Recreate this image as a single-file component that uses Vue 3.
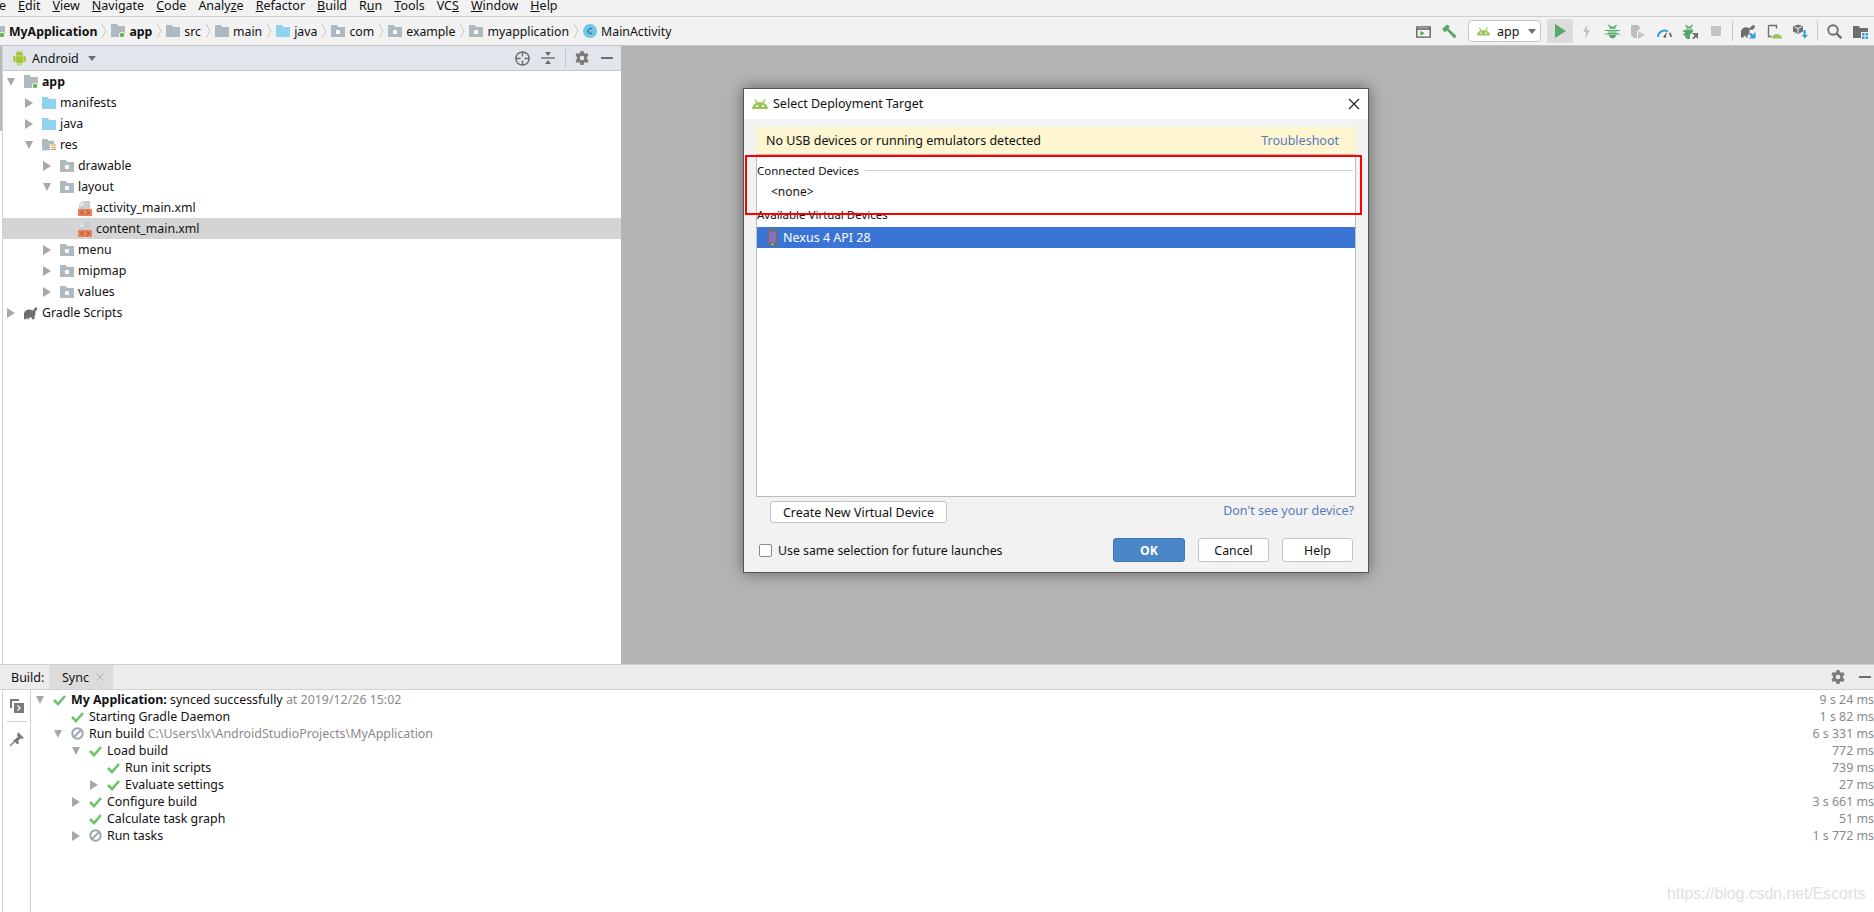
<script setup>
const menus = [['F','ile'],['E','dit'],['V','iew'],['N','avigate'],['C','ode'],['','Analy','z','e'],['R','efactor'],['B','uild'],['','R','u','n'],['T','ools'],['','VC','S',''],['W','indow'],['H','elp']]
const crumbs = [
  { icon:'mod', t:'MyApplication', b:true },
  { icon:'mod', t:'app', b:true },
  { icon:'fg', t:'src' },
  { icon:'fg', t:'main' },
  { icon:'fb', t:'java' },
  { icon:'fr', t:'com' },
  { icon:'fr', t:'example' },
  { icon:'fr', t:'myapplication' },
  { icon:'cls', t:'MainActivity', last:true },
]
const tree = [
  { l:0, a:'d', i:'mod', t:'app', b:true },
  { l:1, a:'r', i:'fb', t:'manifests' },
  { l:1, a:'r', i:'fb', t:'java' },
  { l:1, a:'d', i:'fres', t:'res' },
  { l:2, a:'r', i:'fr', t:'drawable' },
  { l:2, a:'d', i:'fr', t:'layout' },
  { l:3, i:'xml', t:'activity_main.xml' },
  { l:3, i:'xml', t:'content_main.xml', sel:true },
  { l:2, a:'r', i:'fr', t:'menu' },
  { l:2, a:'r', i:'fr', t:'mipmap' },
  { l:2, a:'r', i:'fr', t:'values' },
  { l:0, a:'r', i:'gradle', t:'Gradle Scripts' },
]
const build = [
  { l:0, a:'d', i:'chk', b:'My Application:', t:' synced successfully', g:' at 2019/12/26 15:02', d:'9 s 24 ms' },
  { l:1, i:'chk', t:'Starting Gradle Daemon', d:'1 s 82 ms' },
  { l:1, a:'d', i:'no', t:'Run build', g:' C:\\Users\\lx\\AndroidStudioProjects\\MyApplication', d:'6 s 331 ms' },
  { l:2, a:'d', i:'chk', t:'Load build', d:'772 ms' },
  { l:3, i:'chk', t:'Run init scripts', d:'739 ms' },
  { l:3, a:'r', i:'chk', t:'Evaluate settings', d:'27 ms' },
  { l:2, a:'r', i:'chk', t:'Configure build', d:'3 s 661 ms' },
  { l:2, i:'chk', t:'Calculate task graph', d:'51 ms' },
  { l:2, a:'r', i:'no', t:'Run tasks', d:'1 s 772 ms' },
]
</script>

<template>
  <div class="ide">
    <svg class="sprite" aria-hidden="true">
      <symbol id="fg" viewBox="0 0 14 14"><path d="M0 1h6l1 2h7v10H0z" fill="#AEB9C0"/></symbol>
      <symbol id="fb" viewBox="0 0 14 14"><path d="M0 1h6l1 2h7v10H0z" fill="#8FD3EE"/></symbol>
      <symbol id="fr" viewBox="0 0 14 14"><path d="M0 1h6l1 2h7v10H0z" fill="#AEB9C0"/><rect x="5" y="6" width="4" height="4" rx="1" fill="#fff"/></symbol>
      <symbol id="fres" viewBox="0 0 16 14"><path d="M0 0h6l1 2h7v11H0z" fill="#AEB9C0"/><path d="M9 6h7v9H9z" fill="#fff"/><path d="M10 7h6M10 9.500h6M10 12h6" stroke="#D19A4B" stroke-width="1.200"/></symbol>
      <symbol id="mod" viewBox="0 0 14 14"><path d="M0 0h6l1 2h7v11H0z" fill="#AEB9C0"/><circle cx="11" cy="11" r="3" fill="#fff"/><circle cx="11" cy="11" r="2.200" fill="#62B543"/></symbol>
      <symbol id="cls" viewBox="0 0 14 14"><circle cx="7" cy="7" r="7" fill="#6FC5E8"/><path d="M9 5a2.500 2.500 0 1 0 0 4" fill="none" stroke="#22566E" stroke-width="1"/></symbol>
      <symbol id="xml" viewBox="0 0 14 16"><path d="M4 1h8v8H1V5z" fill="#C9CDD1"/><path d="M5 2v3H2" fill="none" stroke="#fff"/><rect y="9" width="14" height="7" fill="#E8825A"/><path d="M5 10.500 3 12.500l2 2M9 10.500l2 2-2 2" fill="none" stroke="#8a3a1a" stroke-width="1"/></symbol>
      <symbol id="gradle" viewBox="0 0 16 14"><path d="M0 14V8C0 5 3 3 6 3c2 0 3 1 5 1 0-2 2-4 4-3 1 2-1 3-2 4v3c0 2-1 2-1 3v3H9v-2H6v2H4v-2c-1 0-1 1-1 2z" fill="#6E6E6E"/></symbol>
      <symbol id="chk" viewBox="0 0 13 12"><path d="M1 6.500 5 10.500 12 2.500" fill="none" stroke="#6CC46C" stroke-width="2.600"/></symbol>
      <symbol id="no" viewBox="0 0 13 13"><circle cx="6.500" cy="6.500" r="5.200" fill="none" stroke="#9AA7B0" stroke-width="2"/><path d="M3 10 10 3" stroke="#9AA7B0" stroke-width="2"/></symbol>
      <symbol id="robot" viewBox="0 0 14 18"><path d="M3 6a4 4 0 0 1 8 0zM3 7h8v7H9v3H8v-3H6v3H5v-3H3zM0 7h2v6H0zM12 7h2v6h-2zM4 0l1.500 3M10 0 8.500 3" fill="#A4C639" stroke="#A4C639" stroke-width=".6"/></symbol>
      <symbol id="head" viewBox="0 0 16 10"><path d="M0 10a8 7 0 0 1 16 0z" fill="#9CC45A"/><path d="M3 0l2 4M13 0l-2 4" stroke="#9CC45A" stroke-width="1.300"/><circle cx="5" cy="7" r="1" fill="#fff"/><circle cx="11" cy="7" r="1" fill="#fff"/></symbol>
      <symbol id="gear" viewBox="0 0 14 14"><path fill-rule="evenodd" d="M5.500 0h3l.4 2 1.500.8 1.900-.8L13.500 4.700 12 6v2l1.500 1.300-1.200 2.700-1.900-.8-1.500.8-.4 2h-3l-.4-2-1.500-.8-1.900.8L.5 9.300 2 8V6L.5 4.700 1.700 2l1.900.8L5.100 2zM7 4.700a2.300 2.300 0 1 0 0 4.600 2.300 2.300 0 0 0 0-4.600z" fill="#7a7a7a"/></symbol>
      <symbol id="phone" viewBox="0 0 12 20"><rect width="12" height="20" rx="2" fill="#6E6E6E"/><rect x="2" y="3" width="8" height="13" fill="#8A6FC0"/><circle cx="6" cy="18" r="1" fill="#ddd"/></symbol>
    </svg>

    <div class="menubar">
      <span v-for="(m, k) in menus" :key="k" class="menu"><template v-if="m.length === 2"><u>{{ m[0] }}</u>{{ m[1] }}</template><template v-else>{{ m[1] }}<u>{{ m[2] }}</u>{{ m[3] }}</template></span>
    </div>

    <div class="toolbar">
      <div class="crumbs">
        <template v-for="c in crumbs" :key="c.t">
          <svg class="ic14"><use :href="'#' + c.icon"/></svg>
          <span class="crumb" :class="{ bold: c.b }">{{ c.t }}</span>
          <svg v-if="!c.last" class="chev" viewBox="0 0 6 16"><path d="M1 1 5 8 1 15" fill="none" stroke="#c8c8c8"/></svg>
        </template>
      </div>
      <div class="actions">
        <svg class="tb" viewBox="0 0 15 15"><path d="M.8 2.800h13.400v10.400H.8zM.8 5h13.400" fill="none" stroke="#5c5c5c" stroke-width="1.300"/><path d="M4.500 7l4 2.300-4 2.300z" fill="#499C54"/></svg>
        <svg class="tb" viewBox="0 0 15 15"><path d="M0 5 5 .5l3 2L6.500 4.500l8 7.500-2.200 2.500L5 6.500 3 8.500z" fill="#59A869"/></svg>
        <div class="combo">
          <svg class="combo-ic"><use href="#head"/></svg>
          <span class="combo-t">app</span>
          <span class="combo-caret"></span>
        </div>
        <div class="runbtn"><svg width="11" height="14" viewBox="0 0 11 14"><path d="M0 0 11 7 0 14z" fill="#59A869"/></svg></div>
        <svg class="tb" viewBox="0 0 15 15"><path d="M8 1 4 8h3l-1 7 5-9H8z" fill="#c4c4c4"/></svg>
        <svg class="tb" viewBox="0 0 15 15"><path d="M4 .5 6 2.500h3L11 .5l1 1-2 1.800 1.200 1.400H3.800L5 3.300l-2-1.800zM3 6h9v1.500H3zM3 8.500h9V10H3zM3.500 11h8c-1 2-2.500 3.500-4 3.500s-3-1.500-4-3.500z" fill="#59A869"/><path d="M0 6h15v1H0zM0 9.500h15v1H0z" fill="#59A869"/></svg>
        <svg class="tb" viewBox="0 0 15 15"><path d="M0 1h7l2 3v1L6 7v7H3L0 11z" fill="#bdbdbd"/><path d="M7 7l7 4-7 4z" fill="#c8c8c8"/></svg>
        <svg class="tb" viewBox="0 0 15 15"><path d="M1 13a6.500 6.500 0 0 1 10-5.500" fill="none" stroke="#389FD6" stroke-width="2"/><path d="M12.500 9a6.500 6.500 0 0 1 1.500 4" fill="none" stroke="#6e6e6e" stroke-width="2"/><path d="M6 13l4-5-1.500 6z" fill="#555"/></svg>
        <svg class="tb" viewBox="0 0 15 15"><path d="M3 .5 5 2.500h2L9 .5l1 1-2 1.800L9 4.500H3l1-1.200-2-1.800zM2 5.500h8V8L7 10.500V15H5c-2 0-3-2-3.500-4H0V9.500h2V8H0V6.500h2z" fill="#59A869"/><path d="M9 9h6v6l-2-2-2.500 2.500-1.300-1.300L11.700 11.700z" fill="#6e6e6e"/></svg>
        <span class="stop"></span>
        <span class="tsep sa"></span>
        <svg class="tb" viewBox="0 0 16 15"><path d="M0 14V8c0-3 3-5 5.500-5 2 0 2.500 1 4 1 .5-2 3-4 5-3 1 2-1 3.500-2 4.500H9v4l-2 2v2.500H5v-2H3v2z" fill="#6E6E6E"/><path d="M15.500 8v7h-7l2.300-2.300L8.500 10.500l1.800-1.800 2.300 2.200z" fill="#389FD6"/></svg>
        <svg class="tb" viewBox="0 0 15 15"><path d="M1.500 1.500h8v3M1.500 1.500v11h3" fill="none" stroke="#6e6e6e" stroke-width="1.400"/><path d="M5 14.500a5 4.500 0 0 1 10 0z" fill="#9CC45A"/></svg>
        <svg class="tb" viewBox="0 0 15 15"><path d="M5 .5l5 2v5l-5 2.500L0 7.500v-5z" fill="#6e6e6e"/><path d="M1.500 3 5 4.500 8.500 3M5 4.500V9" fill="none" stroke="#fff"/><path d="M10.500 6h2.200v5H15l-3.200 3.500L8.500 11h2z" fill="#389FD6"/></svg>
        <span class="tsep sb"></span>
        <svg class="tb" viewBox="0 0 15 15"><circle cx="6" cy="6" r="4.800" fill="none" stroke="#6e6e6e" stroke-width="1.900"/><path d="M9.500 9.500l4.800 4.800" stroke="#6e6e6e" stroke-width="2.400"/></svg>
        <svg class="tb" viewBox="0 0 15 15"><path d="M0 2h6l1 2h8v4H8v6H0z" fill="#6e6e6e"/><path d="M9 9h2.500v2.500H9zM12.500 9H15v2.500h-2.500zM9 12.500h2.500V15H9zM12.500 12.500H15V15h-2.500z" fill="#389FD6"/></svg>
      </div>
    </div>

    <div class="main">
      <div class="strip"><span class="strip-mark"></span></div>
      <div class="project">
        <div class="phead">
          <svg class="robot"><use href="#robot"/></svg>
          <span class="ptitle">Android</span>
          <span class="caret"></span>
          <div class="pacts">
            <svg class="pa cross" viewBox="0 0 18 18"><circle cx="9" cy="9" r="7" fill="none" stroke="#6e6e6e" stroke-width="1.600"/><path d="M9 2v5M9 11v5M2 9h5M11 9h5" stroke="#6e6e6e" stroke-width="1.600"/></svg>
            <svg class="pa" viewBox="0 0 14 14"><path d="M0 7h14" stroke="#6e6e6e" stroke-width="1.400"/><path d="M4 1h6L7 5zM4 13h6L7 9z" fill="#6e6e6e"/></svg>
            <span class="psep"></span>
            <svg class="pa pgear"><use href="#gear"/></svg>
            <span class="pmin pm"></span>
          </div>
        </div>
        <div class="ptree">
          <div v-for="r in tree" :key="r.t" class="prow" :class="{ sel: r.sel }" :style="{ paddingLeft: r.l * 18 + 'px' }">
            <span class="abox"><span v-if="r.a" :class="r.a === 'd' ? 'tri-d' : 'tri-r'"></span></span>
            <svg class="ric"><use :href="'#' + r.i"/></svg>
            <span :class="{ bold: r.b }">{{ r.t }}</span>
          </div>
        </div>
      </div>
      <div class="canvas"></div>
    </div>

    <div class="bpanel">
      <div class="bhead">
        <span class="blabel">Build:</span>
        <div class="btab"><span>Sync</span><svg width="8" height="8" viewBox="0 0 8 8"><path d="M.5.500l7 7M7.500.500l-7 7" stroke="#b5b5b5"/></svg></div>
        <div class="bright">
          <svg class="pa"><use href="#gear"/></svg>
          <span class="pmin"></span>
        </div>
      </div>
      <div class="bbody">
        <div class="bside">
          <svg class="bs-ic" viewBox="0 0 14 14"><path d="M0 0h9v2H2v7H0z" fill="#7a7a7a"/><path d="M4 4h10v10H4z" fill="#7a7a7a"/><path d="M7.500 6.500l2.500 2.500-2.500 2.500" fill="none" stroke="#fff" stroke-width="1.300"/></svg>
          <span class="bs-sep"></span>
          <svg class="bs-ic" viewBox="0 0 14 14"><path d="M8 0l6 6-2 1-1-1-3 3 1 2-1.500 1.500L3 8l2-.5 3-3-1-1z" fill="#7a7a7a"/><path d="M0 14l5-5" stroke="#7a7a7a" stroke-width="1.400"/></svg>
        </div>
        <div class="blist">
          <div v-for="r in build" :key="r.t + r.d" class="brow" :style="{ paddingLeft: r.l * 18 + 'px' }">
            <span class="babox"><span v-if="r.a" :class="r.a === 'd' ? 'tri-d' : 'tri-r'"></span></span>
            <svg class="bic"><use :href="'#' + r.i"/></svg>
            <span class="btext"><b v-if="r.b">{{ r.b }}</b>{{ r.t }}<span v-if="r.g" class="gray">{{ r.g }}</span></span>
            <span class="gray dur">{{ r.d }}</span>
          </div>
        </div>
      </div>
    </div>

    <div class="dialog">
      <div class="dtitle">
        <svg class="dhead"><use href="#head"/></svg>
        <span>Select Deployment Target</span>
        <svg class="dclose" viewBox="0 0 12 12"><path d="M1 1l10 10M11 1 1 11" stroke="#222" stroke-width="1.100"/></svg>
      </div>
      <div class="dbody">
        <div class="notice">
          <span>No USB devices or running emulators detected</span>
          <span class="link">Troubleshoot</span>
        </div>
        <div class="dlist">
          <div class="lgroup"><span>Connected Devices</span><span class="lline"></span></div>
          <div class="lnone">&lt;none&gt;</div>
          <div class="lgroup2">Available Virtual Devices</div>
          <div class="lsel"><svg class="lphone"><use href="#phone"/></svg><span>Nexus 4 API 28</span></div>
        </div>
        <div class="createrow">
          <button class="btn create">Create New Virtual Device</button>
          <span class="link">Don't see your device?</span>
        </div>
        <div class="footer">
          <span class="check"></span>
          <span class="checkt">Use same selection for future launches</span>
          <button class="btn ok">OK</button>
          <button class="btn act">Cancel</button>
          <button class="btn act">Help</button>
        </div>
      </div>
      <div class="redbox"></div>
    </div>

    <div class="wm">https://blog.csdn.net/Escorts</div>
  </div>
</template>

<style scoped>
.ide { position: relative; width: 1874px; height: 912px; overflow: hidden; display: flex; flex-direction: column; background: #f2f2f2; color: #111; font: 12.500px/17px "Noto Sans", "Open Sans", sans-serif; }
.sprite { position: absolute; width: 0; height: 0; }
u { text-decoration: underline; text-underline-offset: 1px; }
.bold { font-weight: 700; }
.menubar { height: 16px; border-bottom: 1px solid #d0d0d0; display: flex; gap: 12px; margin-left: -14px; align-items: flex-start; line-height: 12px; flex: none; background: #f2f2f2; overflow: hidden; }
.menu { white-space: nowrap; }
.toolbar { height: 28px; border-bottom: 1px solid #c4c4c4; display: flex; align-items: center; justify-content: space-between; flex: none; }
.crumbs { display: flex; align-items: center; margin-left: -9px; font-size: 12.300px; }
.ic14 { width: 14px; height: 14px; flex: none; margin-right: 4px; }
.crumb { white-space: nowrap; }
.chev { width: 6px; height: 16px; margin: 0 4px; flex: none; }
.actions { display: flex; align-items: center; gap: 11px; padding-right: 6px; }
.tb { width: 15px; height: 15px; flex: none; }
.combo { width: 73px; height: 22px; box-sizing: border-box; border: 1px solid #c4c4c4; border-radius: 4px; background: #fff; display: flex; align-items: center; padding-left: 8px; margin-right: -5px; }
.combo-ic { width: 13px; height: 9px; }
.combo-t { margin-left: 7px; }
.combo-caret { margin-left: 9px; width: 0; height: 0; border: 4px solid transparent; border-top: 5px solid #6e6e6e; border-bottom: 0; }
.runbtn { width: 26px; height: 24px; background: #dcdcdc; border-radius: 2px; display: flex; align-items: center; justify-content: center; margin-right: -5px; }
.stop { width: 10px; height: 10px; background: #c4c4c4; margin-left: 2px; }
.tsep { width: 1px; height: 20px; background: #c8c8c8; }
.sa { margin-right: -3px; }
.sb { margin: 0 -2px; }
.main { flex: none; height: 618px; display: flex; }
.strip { width: 3px; box-sizing: border-box; background: #fff; border-right: 1px solid #d0d0d0; flex: none; }
.strip-mark { display: block; width: 2px; height: 85px; background: #b9b9b9; }
.project { width: 618px; flex: none; background: #fff; display: flex; flex-direction: column; }
.phead { height: 24px; background: #e2e6ec; border-bottom: 1px solid #c8c8c8; display: flex; align-items: center; padding-left: 10px; flex: none; }
.robot { width: 13px; height: 16px; }
.ptitle { margin-left: 6px; }
.caret { margin-left: 9px; width: 0; height: 0; border: 4px solid transparent; border-top: 5px solid #6e6e6e; border-bottom: 0; }
.pacts { margin-left: auto; display: flex; align-items: center; gap: 10px; padding-right: 8px; }
.pa { width: 14px; height: 14px; flex: none; }
.cross { width: 17px; height: 17px; }
.pgear { margin-left: -1px; }
.pm { margin-left: 2px; }
.psep { width: 1px; height: 20px; background: #c8c8c8; }
.pmin { width: 12px; height: 2px; background: #6e6e6e; }
.ptree { flex: 1; font-size: 12.300px; }
.prow { height: 21px; display: flex; align-items: center; }
.prow.sel { background: #d4d4d4; }
.abox { width: 21px; height: 21px; flex: none; display: flex; align-items: center; padding-left: 4px; box-sizing: border-box; }
.ric { width: 14px; height: 16px; margin-right: 4px; flex: none; }
.tri-r { width: 0; height: 0; border: 5px solid transparent; border-left: 8px solid #a8a8a8; border-right: 0; }
.tri-d { width: 0; height: 0; border: 4.500px solid transparent; border-top: 8px solid #a8a8a8; border-bottom: 0; }
.canvas { flex: 1; background: #b3b3b3; }
.bpanel { flex: 1; display: flex; flex-direction: column; border-top: 1px solid #d0d0d0; background: #fff; min-height: 0; }
.bhead { height: 24px; background: #ececec; border-bottom: 1px solid #d0d0d0; display: flex; align-items: center; padding-left: 11px; flex: none; }
.blabel { width: 38px; }
.btab { width: 64px; height: 24px; background: #dcdcdc; display: flex; align-items: center; gap: 7px; padding-left: 13px; box-sizing: border-box; }
.bright { margin-left: auto; display: flex; align-items: center; gap: 14px; padding-right: 3px; }
.bbody { flex: 1; display: flex; min-height: 0; }
.bside { width: 29px; margin-left: 2px; border-left: 1px solid #d0d0d0; border-right: 1px solid #d0d0d0; display: flex; flex-direction: column; align-items: center; padding-top: 9px; background: #fff; flex: none; box-sizing: border-box; }
.bs-ic { width: 14px; height: 14px; }
.bs-sep { width: 20px; height: 1px; background: #cfcfcf; margin: 8px 0 10px; }
.blist { flex: 1; min-width: 0; padding-top: 1px; font-size: 12.400px; }
.brow { height: 17px; display: flex; align-items: center; white-space: pre; }
.babox { width: 22px; flex: none; padding-left: 5px; box-sizing: border-box; display: flex; align-items: center; height: 17px; }
.bic { width: 13px; height: 13px; margin-right: 5px; flex: none; }
.btext { flex: 1; }
.btext b { font-weight: 700; }
.gray { color: #8a8a8a; }
.dialog { position: absolute; left: 743px; top: 88px; width: 626px; height: 485px; box-sizing: border-box; border: 1px solid #555; background: #f2f2f2; box-shadow: 0 0 14px rgba(0,0,0,.45); display: flex; flex-direction: column; }
.dtitle { height: 30px; background: #fff; display: flex; align-items: center; flex: none; padding: 0 0 1px 8px; box-sizing: border-box; }
.dhead { width: 16px; height: 10px; margin-right: 5px; }
.dclose { width: 12px; height: 12px; margin-left: auto; margin-right: 8px; }
.dbody { flex: 1; padding: 8px 12px 0; display: flex; flex-direction: column; min-height: 0; }
.notice { height: 27px; background: #fdf6d0; display: flex; align-items: center; justify-content: space-between; padding: 0 17px 0 10px; flex: none; }
.link { color: #5a79bd; }
.dlist { height: 343px; box-sizing: border-box; border: 1px solid #bdbdbd; background: #fff; flex: none; font-size: 11.500px; }
.lgroup { display: flex; align-items: center; gap: 6px; height: 18px; margin-top: 6px; }
.lline { flex: 1; height: 1px; background: #cdcdcd; margin-right: 2px; }
.lnone { padding-left: 14px; margin-top: 4px; height: 18px; font-size: 12px; }
.lgroup2 { height: 18px; margin-top: 5px; line-height: 18px; }
.lsel { height: 21px; margin-top: 3px; background: #3a75d6; color: #fff; display: flex; align-items: center; padding-left: 10px; font-size: 12.500px; }
.lphone { width: 11px; height: 17px; margin-right: 5px; }
.createrow { display: flex; align-items: flex-start; justify-content: space-between; padding: 4px 2px 0 14px; height: 22px; flex: none; }
.createrow .link { line-height: 20px; }
.btn { font: inherit; box-sizing: border-box; border: 1px solid #c4c4c4; border-radius: 3px; background: #fff; color: #111; padding: 0; height: 24px; }
.create { width: 177px; height: 22px; }
.footer { display: flex; align-items: center; padding: 15px 3px 0 3px; font-size: 12.300px; }
.check { width: 13px; height: 13px; border: 1px solid #8a8a8a; border-radius: 2px; background: #fff; box-sizing: border-box; flex: none; }
.checkt { margin-left: 6px; flex: 1; }
.ok { width: 72px; background: #4a86c8; border-color: #3f76b3; color: #fff; font-weight: 700; }
.act { width: 71px; margin-left: 13px; }
.redbox { position: absolute; left: 1px; top: 66px; width: 617px; height: 60px; box-sizing: border-box; border: 2px solid #f00; }
.wm { position: absolute; left: 1667px; top: 884px; font: 15.800px/20px "Liberation Sans", sans-serif; color: #e0e0e0; white-space: nowrap; }
</style>
